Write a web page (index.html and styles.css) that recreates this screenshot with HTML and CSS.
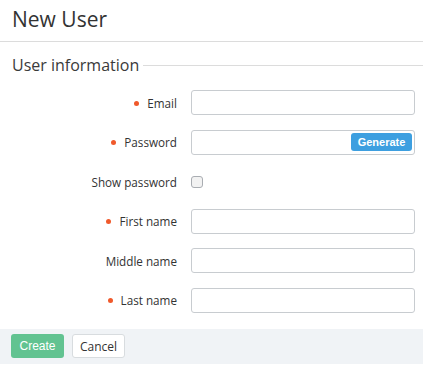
FILE: index.html
```html
<!DOCTYPE html>
<html lang="en">
<head>
  <meta charset="UTF-8">
  <title>New User</title>
  <link rel="stylesheet" href="styles.css">
</head>
<body>
  <div class="page-head">
    <h1>New User</h1>
  </div>

  <div class="section">
    <h2><span>User information</span></h2>

    <div class="form">
      <div class="row">
        <label class="req">Email</label>
        <input type="text" class="field">
      </div>
      <div class="row">
        <label class="req">Password</label>
        <div class="field pass">
          <button class="gen">Generate</button>
        </div>
      </div>
      <div class="row">
        <label>Show password</label>
        <span class="check"></span>
      </div>
      <div class="row">
        <label class="req">First name</label>
        <input type="text" class="field">
      </div>
      <div class="row">
        <label>Middle name</label>
        <input type="text" class="field">
      </div>
      <div class="row">
        <label class="req">Last name</label>
        <input type="text" class="field">
      </div>
    </div>
  </div>

  <div class="footer">
    <button class="btn create">Create</button>
    <button class="btn cancel">Cancel</button>
  </div>
</body>
</html>
```

FILE: styles.css
```css
body {
  margin: 0;
  font-family: "Open Sans", sans-serif;
  color: #333;
  background: #fff;
}

.page-head {
  height: 41px;
  border-bottom: 1px solid #dcdcdc;
  padding: 0 12px;
}

.page-head h1 {
  margin: 0;
  font-size: 21px;
  font-weight: 400;
  line-height: 38px;
  color: #333;
}

.section h2 {
  display: flex;
  align-items: center;
  margin: 0;
  padding: 8px 0 0 12px;
  height: 29px;
  font-size: 16px;
  font-weight: 400;
  color: #3a3a3a;
}

.section h2::after {
  content: "";
  flex: 1;
  height: 1px;
  background: #dcdcdc;
  margin-left: 4px;
  margin-top: 2px;
}

.form {
  display: flex;
  flex-direction: column;
  gap: 14.6px;
  padding: 11px 8px 0 0;
}

.row {
  display: flex;
  align-items: center;
  height: 25px;
}

.row label {
  width: 177px;
  text-align: right;
  font-size: 11.7px;
  color: #333;
  margin-right: 14px;
}

.row label.req::before {
  content: "";
  display: inline-block;
  width: 5px;
  height: 5px;
  border-radius: 50%;
  background: #f0592b;
  margin-right: 8px;
  vertical-align: 2px;
}

.field {
  box-sizing: border-box;
  width: 224px;
  height: 25px;
  border: 1px solid #c8ccd0;
  border-radius: 3px;
  padding: 0 6px;
  margin: 0;
  font: inherit;
  background: #fff;
}

.pass {
  display: flex;
  align-items: center;
  justify-content: flex-end;
  padding: 0 2px 0 0;
}

.gen {
  height: 18px;
  width: 61px;
  border: none;
  border-radius: 3px;
  background: #3d9fe0;
  color: #fff;
  font-family: "Liberation Sans", Arial, sans-serif;
  font-size: 11px;
  font-weight: bold;
  padding: 0;
}

.check {
  box-sizing: border-box;
  width: 12px;
  height: 12px;
  border: 1px solid #a9adb2;
  border-radius: 3px;
  background: #f2f2f2;
}

.footer {
  display: flex;
  gap: 8px;
  margin-top: 16px;
  height: 35px;
  align-items: center;
  padding: 0 11px;
  background: #f0f3f6;
}

.btn {
  box-sizing: border-box;
  height: 24px;
  border-radius: 3px;
  font-family: "Liberation Sans", Arial, sans-serif;
  font-size: 12px;
  padding: 0;
}

.create {
  width: 53px;
  border: none;
  background: #62c391;
  color: #fff;
}

.cancel {
  width: 53px;
  border: 1px solid #d8dcdf;
  background: #fff;
  color: #333;
  font-family: "Open Sans", sans-serif;
}
```
